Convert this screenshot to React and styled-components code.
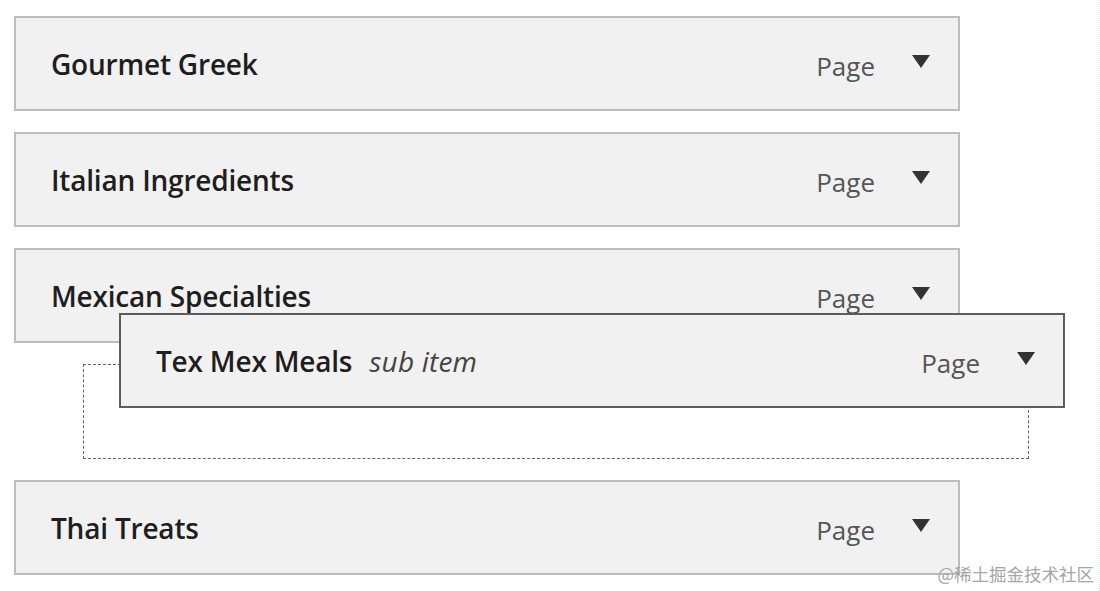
import React from 'react';
import styled, { createGlobalStyle } from 'styled-components';

const GlobalStyle = createGlobalStyle`
  html, body {
    margin: 0;
    padding: 0;
    background: #ffffff;
  }
  body {
    font-family: "Open Sans", "Noto Sans", "Liberation Sans", sans-serif;
  }
`;

const Page = styled.div`
  position: relative;
  width: 1100px;
  height: 591px;
  overflow: hidden;
  padding: 16px 0 0 14px;
  box-sizing: border-box;
  border-right: 1px dotted #e2e2e2;
`;

const MenuList = styled.div`
  width: 946px;
  display: flex;
  flex-direction: column;
  gap: 21px;
`;

const Item = styled.div`
  height: 95px;
  box-sizing: border-box;
  border: 2px solid ${(p) => (p.$dragging ? '#5c5c5c' : '#bdbdbd')};
  background: #f1f1f1;
  display: flex;
  align-items: center;
  padding: 0 27px 0 35px;
`;

const DragHelper = styled(Item)`
  position: absolute;
  left: 119px;
  top: 313px;
  width: 946px;
`;

const Placeholder = styled.div`
  height: 95px;
  width: 946px;
  margin-left: 69px;
  box-sizing: border-box;
  border: 1px dashed #666666;
`;

const Title = styled.span`
  font-size: 28px;
  font-weight: 600;
  color: #1e1e1e;
  letter-spacing: -0.2px;
`;

const SubLabel = styled.span`
  font-size: 28px;
  font-style: italic;
  color: #444444;
  margin-left: 17px;
  letter-spacing: 0.2px;
`;

const Type = styled.span`
  margin-left: auto;
  font-size: 26px;
  color: #555555;
  position: relative;
  top: 2px;
`;

const Arrow = styled.svg`
  width: 20px;
  height: 15px;
  margin-left: 36px;
  position: relative;
  top: -2px;
`;

const Watermark = styled.div`
  position: absolute;
  right: 5px;
  bottom: 5px;
  font-family: "Noto Sans CJK SC", "Noto Sans", sans-serif;
  font-size: 17.5px;
  color: #a6a6a6;
`;

function ToggleArrow() {
  return (
    <Arrow viewBox="0 0 20 15">
      <polygon points="1,1 19,1 10,14" fill="#333333" />
    </Arrow>
  );
}

function MenuItem({ title, sub, dragging, as }) {
  const Box = as || Item;
  return (
    <Box $dragging={dragging}>
      <Title>{title}</Title>
      {sub && <SubLabel>{sub}</SubLabel>}
      <Type>Page</Type>
      <ToggleArrow />
    </Box>
  );
}

export default function App() {
  return (
    <>
      <GlobalStyle />
      <Page>
        <MenuList>
          <MenuItem title="Gourmet Greek" />
          <MenuItem title="Italian Ingredients" />
          <MenuItem title="Mexican Specialties" />
          <Placeholder />
          <MenuItem title="Thai Treats" />
        </MenuList>
        <MenuItem as={DragHelper} title="Tex Mex Meals" sub="sub item" dragging />
        <Watermark>@稀土掘金技术社区</Watermark>
      </Page>
    </>
  );
}
